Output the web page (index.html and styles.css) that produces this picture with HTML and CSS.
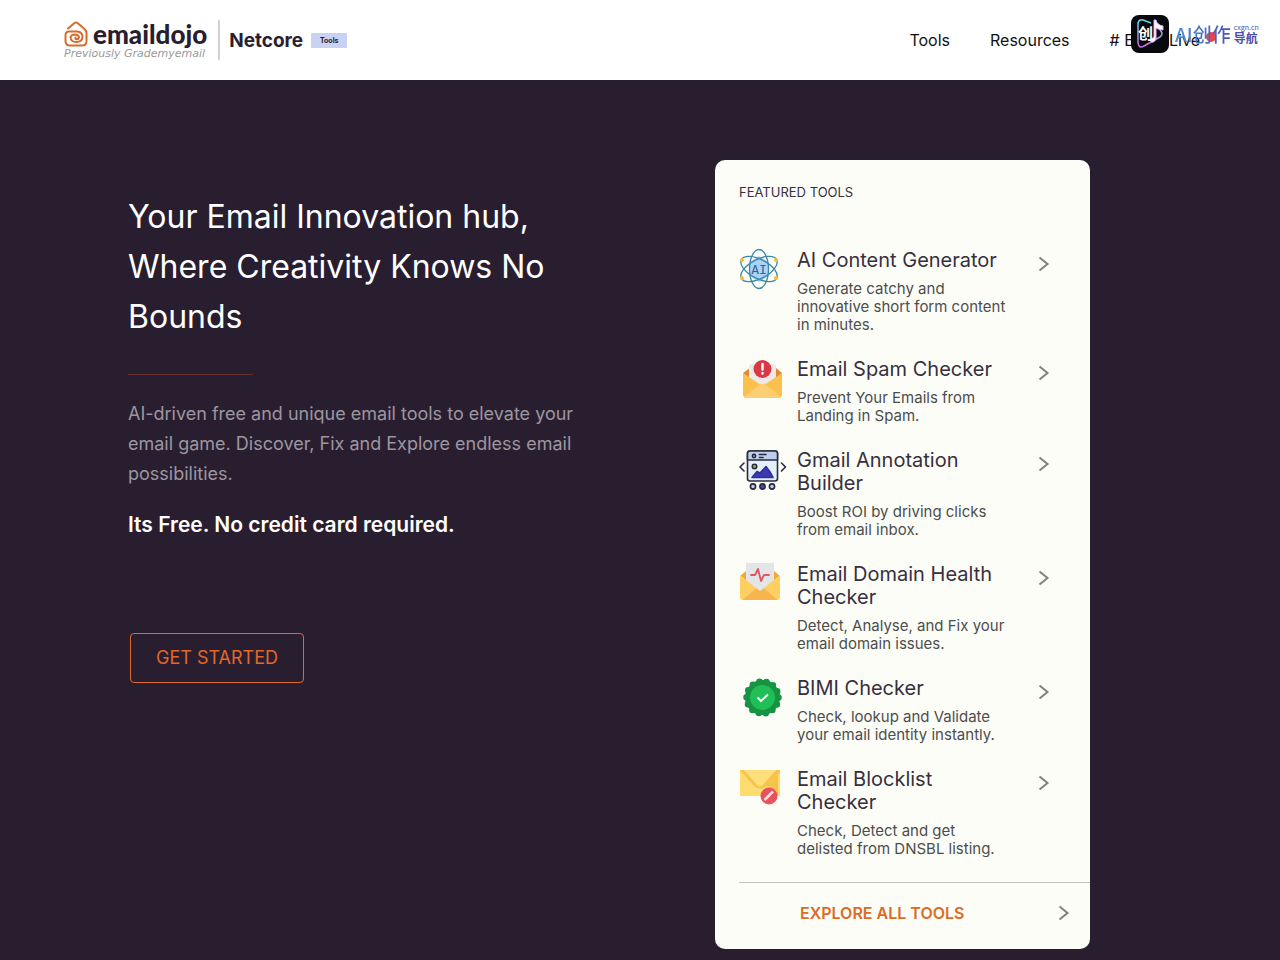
FILE: index.html
```html
<!DOCTYPE html>
<html lang="en">
	<head>
		<meta charset="UTF-8">
		<title>Emaildojo Tools</title>
		<link rel="stylesheet" href="styles.css">
	</head>
	<body>
		<header class="header">
			<a class="brand" href="#">
				<span class="dojo">
					<span class="dojo-name">
						<svg class="dojo-icon" viewBox="0 0 24 26" fill="none" stroke="#d96c2b" stroke-width="2" stroke-linecap="round" stroke-linejoin="round">
							<path d="M4 7.500L10.500 2Q12 1 13.500 2L20.500 8Q22.500 10 22.500 12V20Q22.500 24.500 18 24.500H6Q1.500 24.500 1.500 20V14Q1.500 10.500 5 10.500H13Q18.500 11 18.500 16Q18 21 12.500 21Q7 21 6.500 16.500Q7 13.500 11 13.500Q15 14 15 16.500Q14.500 18.500 12.500 18.300Q11 18 11.500 16.500"/>
						</svg>
						<strong>emaildojo</strong>
					</span>
					<em>Previously Grademyemail</em>
				</span>
				<span class="netcore">Netcore</span>
				<span class="badge">Tools</span>
			</a>
			<nav class="nav">
				<a href="#">Tools</a>
				<a href="#">Resources</a>
				<a class="live" href="#"># Email Live</a>
			</nav>
			<div class="stamp">
				<svg class="stamp-icon" viewBox="0 0 38 38">
					<defs>
						<linearGradient id="neon" x1="0" y1="0" x2="0" y2="1">
							<stop offset="0" stop-color="#62dbe5"/>
							<stop offset="1" stop-color="#d16be0"/>
						</linearGradient>
					</defs>
					<rect width="38" height="38" rx="8" fill="#08090d"/>
					<path d="M20 8L12 5Q8 4 7 8V28Q8 34 13 31L29 22Q33 19 29 15" fill="none" stroke="url(#neon)" stroke-width="1.500"/>
					<path d="M23 5H25Q26 10 32 11V15Q28 15 25 13V23Q24 28 20 27Q19 24 23 22Z" fill="#fff" stroke="#e7a9ff" stroke-width="1"/>
					<text x="7" y="24" font-size="15" font-weight="700" fill="#fff">创</text>
				</svg>
				<span class="stamp-name">AI创作</span>
				<span class="stamp-side"><small>cxgn.cn</small><b>导航</b></span>
			</div>
		</header>

		<main class="hero">
			<section class="intro">
				<h1>Your Email Innovation hub, Where Creativity Knows No Bounds</h1>
				<hr>
				<p class="lead">AI-driven free and unique email tools to elevate your email game. Discover, Fix and Explore endless email possibilities.</p>
				<p class="free">Its Free. No credit card required.</p>
				<button class="start" type="button">GET STARTED</button>
			</section>

			<section class="card">
				<h2>FEATURED TOOLS</h2>
				<ul class="tools">
					<li><a href="#">
						<svg class="icon" viewBox="0 0 48 42">
							<path d="M20 7L30 13.500V26.500L20 33L10 26.500V13.500Z" fill="#a9d4f7"/>
							<g fill="none" stroke="#3b86ab" stroke-width="1.300">
								<ellipse cx="20" cy="20" rx="9.500" ry="19.500"/>
								<ellipse cx="20" cy="20" rx="9.500" ry="20" transform="rotate(62 20 20)"/>
								<ellipse cx="20" cy="20" rx="9.500" ry="20" transform="rotate(-62 20 20)"/>
							</g>
							<g fill="#f4bd3c">
								<circle cx="3" cy="11" r="2"/><circle cx="37" cy="11" r="2"/>
								<circle cx="3" cy="29" r="2"/><circle cx="37" cy="29" r="2"/>
							</g>
							<text class="icon-ai" x="20" y="25" text-anchor="middle" fill="#37638b">AI</text>
						</svg>
						<span class="text"><strong>AI Content Generator</strong><span>Generate catchy and innovative short form content in minutes.</span></span>
						<svg class="arrow" viewBox="0 0 12 16"><path d="M1.500 1.500L9.500 8L1.500 14.500"/></svg>
					</a></li>
					<li><a href="#">
						<svg class="icon" viewBox="0 0 48 42">
							<path d="M4 15L11 10H37L43 15L36 23H10Z" fill="#dd8b39"/>
							<path d="M10 9Q10 6 13 6H34Q37 6 37 9V21L24 30L10 21Z" fill="#eee9e6"/>
							<path d="M4 15L23.500 28L43 15V36Q43 40 39 40H8Q4 40 4 36Z" fill="#fcc04d"/>
							<path d="M5 39L20 27Q23.500 24.500 27 27L42 39Q41 40 39 40H8Q6 40 5 39Z" fill="#fdce74"/>
							<circle cx="23.500" cy="11" r="9" fill="#d93848"/>
							<path d="M23.500 6V11.500M23.500 15V15.500" stroke="#fff" stroke-width="2.400" stroke-linecap="round"/>
						</svg>
						<span class="text"><strong>Email Spam Checker</strong><span>Prevent Your Emails from Landing in Spam.</span></span>
						<svg class="arrow" viewBox="0 0 12 16"><path d="M1.500 1.500L9.500 8L1.500 14.500"/></svg>
					</a></li>
					<li><a href="#">
						<svg class="icon" viewBox="0 0 48 42" stroke="#262c3d" stroke-width="1.600" stroke-linecap="round" stroke-linejoin="round" fill="none">
							<rect x="8.500" y="2" width="30" height="30" rx="2.500" fill="#e4effd"/>
							<path d="M8.500 11V4.500Q8.500 2 11 2H36Q38.500 2 38.500 4.500V11Z" fill="#bfcdec"/>
							<circle cx="15" cy="7" r="1.600"/>
							<path d="M20.500 5.500H27M20.500 8.500H24"/>
							<path d="M5 14L1 18L5 22M42.500 14L46.500 18L42.500 22"/>
							<circle cx="15.500" cy="17.500" r="2.200" fill="#b9a348"/>
							<path d="M13 28.500L18 22.500L21 24L27 17.500L31 23L34 28.500Z" fill="#3d39b0" stroke="#30319a"/>
							<circle cx="14" cy="37.500" r="2.600" fill="#bfcdec"/>
							<circle cx="23.500" cy="37.500" r="2.600" fill="#4a45bd"/>
							<circle cx="33" cy="37.500" r="2.600" fill="#bfcdec"/>
						</svg>
						<span class="text"><strong>Gmail Annotation Builder</strong><span>Boost ROI by driving clicks from email inbox.</span></span>
						<svg class="arrow" viewBox="0 0 12 16"><path d="M1.500 1.500L9.500 8L1.500 14.500"/></svg>
					</a></li>
					<li><a href="#">
						<svg class="icon" viewBox="0 0 48 42">
							<path d="M1 13L7 8H35L41 13L34 24H8Z" fill="#f0a83c"/>
							<path d="M7 0H35V18L21 29L7 18Z" fill="#e4e5e6"/>
							<path d="M1 12L17 25L3 37Q1 36 1 34ZM41 12L25 25L39 37Q41 36 41 34Z" fill="#ffd061"/>
							<path d="M3 37L17 25L21 28L25 25L39 37Z" fill="#f8b54c"/>
							<path d="M12 12H16L19 6L22 18L25 12H30" fill="none" stroke="#e25560" stroke-width="1.800" stroke-linecap="round" stroke-linejoin="round"/>
						</svg>
						<span class="text"><strong>Email Domain Health Checker</strong><span>Detect, Analyse, and Fix your email domain issues.</span></span>
						<svg class="arrow" viewBox="0 0 12 16"><path d="M1.500 1.500L9.500 8L1.500 14.500"/></svg>
					</a></li>
					<li><a href="#">
						<svg class="icon" viewBox="0 0 48 42">
							<circle cx="23.500" cy="20.500" r="17.500" fill="#169343"/>
							<circle cx="23.500" cy="20.500" r="16" fill="none" stroke="#169343" stroke-width="6.500" stroke-linecap="round" stroke-dasharray="0 7.181"/>
							<circle cx="23.500" cy="20.500" r="12.500" fill="#21bd56"/>
							<path d="M18.500 20.500L22 24L29 17.500" fill="none" stroke="#e8fff0" stroke-width="2"/>
						</svg>
						<span class="text"><strong>BIMI Checker</strong><span>Check, lookup and Validate your email identity instantly.</span></span>
						<svg class="arrow" viewBox="0 0 12 16"><path d="M1.500 1.500L9.500 8L1.500 14.500"/></svg>
					</a></li>
					<li><a href="#">
						<svg class="icon" viewBox="0 0 48 42">
							<path d="M1 2H41V28H1Z" fill="#ffdc70"/>
							<path d="M1 2H5L18 17Q21 20 24 17L37 2H41V4L39 7V28H26L32 18L27 18Q21 23 15 18Z" fill="#f9c34b"/>
							<path d="M5 2H37L24 16Q21 19 18 16Z" fill="#ffdf7c"/>
							<circle cx="30" cy="28" r="8.500" fill="#e95360"/>
							<path d="M25.500 32L34 23.500" stroke="#ffe1d9" stroke-width="2.500"/>
						</svg>
						<span class="text"><strong>Email Blocklist Checker</strong><span>Check, Detect and get delisted from DNSBL listing.</span></span>
						<svg class="arrow" viewBox="0 0 12 16"><path d="M1.500 1.500L9.500 8L1.500 14.500"/></svg>
					</a></li>
				</ul>
				<a class="explore" href="#">
					<span>EXPLORE ALL TOOLS</span>
					<svg class="arrow" viewBox="0 0 12 16"><path d="M1.500 1.500L9.500 8L1.500 14.500"/></svg>
				</a>
			</section>
		</main>
	</body>
</html>
```
FILE: styles.css
```css
*{
	box-sizing: border-box;
}
body{
	margin: 0;
	font-family: Inter, "Liberation Sans", "Noto Sans CJK SC", sans-serif;
	background: #291e30;
}
a{
	color: inherit;
	text-decoration: none;
}
h1,h2,p,ul{
	margin: 0;
	padding: 0;
	font-weight: 400;
}
.header{
	position: relative;
	display: flex;
	align-items: center;
	justify-content: space-between;
	height: 80px;
	padding: 0 80px 0 5%;
	background: #fff;
}
.brand{
	display: flex;
	align-items: center;
	color: #291e30;
}
.dojo{
	display: flex;
	flex-direction: column;
	height: 40px;
	padding-right: 11px;
	border-right: 2px solid #d2d2d2;
}
.dojo-name{
	display: flex;
	align-items: center;
	gap: 5px;
	height: 29px;
}
.dojo-icon{
	width: 24px;
	height: 26px;
}
.dojo strong{
	font: 900 26px/28px Lato, sans-serif;
}
.dojo em{
	font: italic 11px/12px "DejaVu Sans", sans-serif;
	color: #999;
	white-space: nowrap;
}
.netcore{
	margin-left: 9px;
	font-size: 19px;
	font-weight: 700;
}
.badge{
	margin-left: 8px;
	width: 36px;
	background: #c9d2f2;
	border-radius: 1px;
	font-size: 7px;
	line-height: 15px;
	font-weight: 700;
	text-align: center;
}
.nav{
	display: flex;
	gap: 40px;
	font-size: 16px;
	line-height: 20px;
	color: #111;
}
.live{
	position: relative;
}
/* red "on air" dot */
.live::after{
	content: "";
	position: absolute;
	top: 2px;
	right: -16px;
	width: 10px;
	height: 10px;
	border-radius: 50%;
	background: #ef4444;
}
.stamp{
	position: absolute;
	top: 15px;
	right: 20px;
	display: flex;
	align-items: center;
	gap: 3px;
	width: 129px;
	font-family: "Noto Sans CJK SC", sans-serif;
	color: #4668c4;
}
.stamp-icon{
	flex: none;
	width: 38px;
	height: 38px;
	margin-right: 3px;
}
.stamp-name{
	font-size: 19px;
	line-height: 32px;
	font-weight: 500;
	white-space: nowrap;
	color: transparent;
	background: linear-gradient(90deg, #4a8fd0, #4a52b8);
	-webkit-background-clip: text;
	background-clip: text;
}
.stamp-side{
	display: flex;
	flex-direction: column;
	color: #4b50ab;
}
.stamp-side small{
	font-size: 7px;
	line-height: 8px;
}
.stamp-side b{
	font-size: 12px;
	line-height: 14px;
	white-space: nowrap;
}
.hero{
	display: grid;
	grid-template-columns: 1fr 1fr;
	align-items: start;
	padding: 80px 10% 11px;
}
.intro{
	padding-top: 32px;
	color: #fff;
}
h1{
	max-width: 450px;
	font-size: 32px;
	line-height: 50px;
}
hr{
	width: 125px;
	height: 1px;
	margin: 32px 0 24px;
	border: 0;
	background: #63302a;
}
.lead{
	max-width: 475px;
	font-size: 18px;
	line-height: 30px;
	color: #9c969f;
}
.free{
	margin-top: 20px;
	font-size: 21px;
	line-height: 32px;
	font-weight: 600;
}
.start{
	width: 174px;
	height: 50px;
	margin: 92px 2px 0;
	border: 1px solid #e0682a;
	border-radius: 4px;
	background: none;
	font: 18px/24px Inter, sans-serif;
	color: #e0682a;
}
.card{
	max-width: 375px;
	margin-left: 75px;
	padding: 24px 0 0 24px;
	border-radius: 10px;
	background: #fcfdf7;
}
h2{
	font-size: 13px;
	line-height: 16px;
	color: #382f3e;
}
.tools{
	display: flex;
	flex-direction: column;
	gap: 24px;
	margin-top: 49px;
	padding-bottom: 24px;
	list-style: none;
}
.tools a{
	display: grid;
	grid-template-columns: 48px 214px 12px;
	column-gap: 10px;
	align-items: start;
}
.icon{
	width: 48px;
	height: 42px;
}
.icon-ai{
	font: 13px "DejaVu Sans Mono", monospace;
}
.text strong{
	display: block;
	margin-bottom: 8px;
	font-size: 20px;
	line-height: 23px;
	font-weight: 400;
	color: #382f3e;
}
.text span{
	display: block;
	font-size: 15px;
	line-height: 18px;
	color: #4d4d4d;
}
.arrow{
	width: 12px;
	height: 16px;
	fill: none;
	stroke: #808080;
	stroke-width: 2;
}
.tools .arrow{
	margin: 7px 0 0 17px;
}
.explore{
	display: flex;
	align-items: center;
	justify-content: space-between;
	padding: 20px 20px 26px 61px;
	border-top: 1px solid #c2c4bf;
	font-size: 16px;
	line-height: 20px;
	font-weight: 600;
	color: #db6b25;
}
```
